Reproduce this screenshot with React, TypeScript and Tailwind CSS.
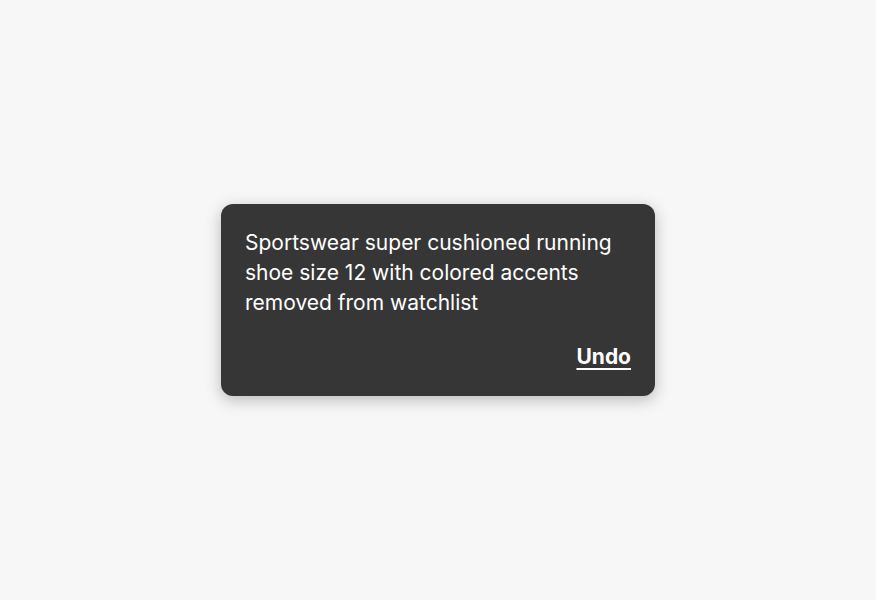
export default function App() {
  return (
    <div className="flex h-[600px] w-full items-center justify-center bg-[#f7f7f7]" style={{ fontFamily: 'Inter, "Noto Sans", sans-serif' }}>
      <div className="w-[434px] rounded-[12px] bg-[#363636] p-6 text-white shadow-[0_4px_16px_rgba(0,0,0,0.25)]">
        <p className="text-[21px] leading-[30px]">
          Sportswear super cushioned running shoe size 12 with colored accents removed from watchlist
        </p>
        <div className="mt-6 flex justify-end">
          <button className="text-[21px] font-bold leading-[30px] underline decoration-2 underline-offset-4">Undo</button>
        </div>
      </div>
    </div>
  );
}
